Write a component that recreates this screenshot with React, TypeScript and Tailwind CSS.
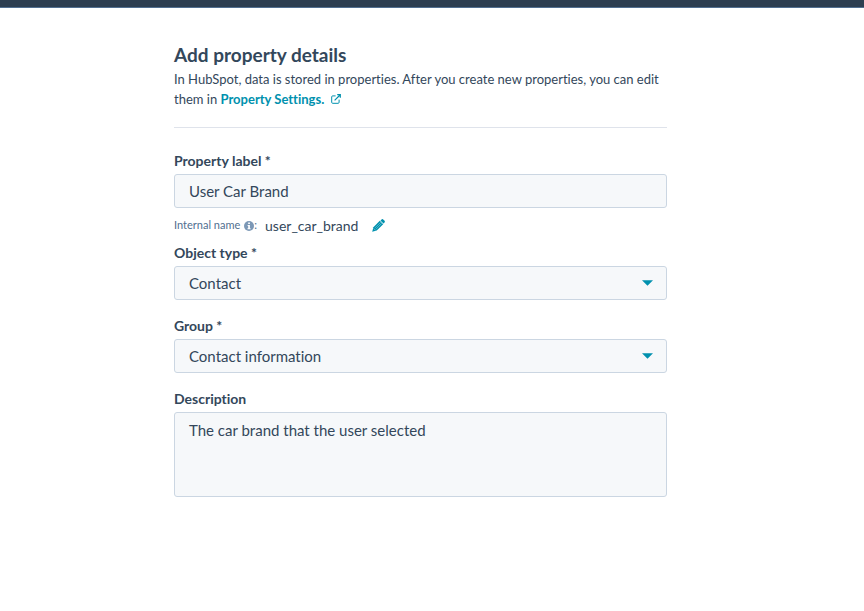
import { useState } from "react";
import type { ReactNode } from "react";

const OBJECT_TYPES = ["Contact", "Company", "Deal", "Ticket"];
const GROUPS = ["Contact information", "Email information", "Web analytics"];

const controlClasses =
  "block w-full rounded-[3px] border border-[#cbd6e2] bg-[#f6f8fa] px-[14px] text-[15px] leading-6 text-[#33475b] outline-none focus:border-[#0091ae]";

interface FieldProps {
  id: string;
  label: string;
  children: ReactNode;
}

function Field({ id, label, children }: FieldProps) {
  return (
    <div>
      <label
        htmlFor={id}
        className="mb-[3px] block text-[14px] leading-5 font-bold"
      >
        {label}
      </label>
      {children}
    </div>
  );
}

interface SelectFieldProps {
  id: string;
  label: string;
  options: string[];
  value: string;
  onChange: (value: string) => void;
}

function SelectField({ id, label, options, value, onChange }: SelectFieldProps) {
  return (
    <Field id={id} label={label}>
      <div className="relative">
        <select
          id={id}
          value={value}
          onChange={(e) => onChange(e.target.value)}
          className={`${controlClasses} h-[34px] appearance-none`}
        >
          {options.map((option) => (
            <option key={option}>{option}</option>
          ))}
        </select>
        <svg
          viewBox="0 0 10 5"
          className="pointer-events-none absolute top-[14px] right-[14px] h-[6px] w-[11px] fill-[#0091ae]"
          aria-hidden="true"
        >
          <path d="M0 0h10L5 5z" />
        </svg>
      </div>
    </Field>
  );
}

function ExternalLinkIcon() {
  return (
    <svg
      viewBox="0 0 10 10"
      className="ml-[7px] inline-block h-[10px] w-[10px] align-baseline"
      fill="none"
      stroke="currentColor"
      aria-hidden="true"
    >
      <path d="M4.6 1.9H1.7a1 1 0 0 0-1 1v5.4a1 1 0 0 0 1 1h5.4a1 1 0 0 0 1-1V5.6" />
      <path d="M3.6 6.4 9 1M6.2.7h3.1v3.1" strokeWidth="1.2" />
    </svg>
  );
}

function InfoIcon() {
  return (
    <svg viewBox="0 0 10 10" className="h-[10px] w-[10px]" aria-hidden="true">
      <circle cx="5" cy="5" r="5" fill="#7c98b6" />
      <path
        d="M4.2 1.5h1.7v1.4H4.2zM3.6 3.9h2.3v3.3h.7v1.1H3.5V7.2h.7V5h-.6z"
        fill="#fff"
      />
    </svg>
  );
}

function PencilIcon() {
  return (
    <svg
      viewBox="0 0 12 12"
      className="h-[13px] w-[13px]"
      fill="currentColor"
      aria-hidden="true"
    >
      <path d="M8.6.6a1.4 1.4 0 0 1 2 0l.8.8a1.4 1.4 0 0 1 0 2l-.8.8L7.8 1.4z" />
      <path d="M7.2 1.7 10.3 4.8 4.4 10.7.2 11.8 1.3 7.6z" />
      <path d="M2.8 8.2 8 3M3.8 9.2 9 4" stroke="#fff" strokeWidth=".3" />
      <path d="M1.6 8.7 3.3 10.4" stroke="#fff" strokeWidth=".4" />
    </svg>
  );
}

export default function App() {
  const [label, setLabel] = useState("User Car Brand");
  const [objectType, setObjectType] = useState("Contact");
  const [group, setGroup] = useState("Contact information");
  const [description, setDescription] = useState(
    "The car brand that the user selected"
  );

  const internalName = label.trim().toLowerCase().replace(/\s+/g, "_");

  return (
    <div className="min-h-screen bg-white font-['Lato','Liberation_Sans',sans-serif] text-[#33475b] [font-variant-ligatures:none]">
      <header className="h-2 border-b border-[#516f90] bg-[#2d3e50]" />
      <main className="pt-[33px] pr-[197px] pb-8 pl-[174px]">
        <section className="border-b border-[#dfe3eb] pb-[18px]">
          <h1 className="text-[19px] leading-7 font-bold">
            Add property details
          </h1>
          <p className="text-[13px] leading-5">
            In HubSpot, data is stored in properties. After you create new
            properties, you can edit them in{" "}
            <a
              href="#property-settings"
              className="font-bold whitespace-nowrap text-[#0091ae]"
            >
              Property Settings.
              <ExternalLinkIcon />
            </a>
          </p>
        </section>

        <form className="pt-[23px]">
          <Field id="property-label" label="Property label *">
            <input
              id="property-label"
              type="text"
              value={label}
              onChange={(e) => setLabel(e.target.value)}
              className={`${controlClasses} h-[34px]`}
            />
          </Field>
          <div className="flex h-[35px] items-center text-[11px] text-[#516f90]">
            <span>Internal name</span>
            <span className="ml-1 flex items-center">
              <InfoIcon />:
            </span>
            <span className="ml-2 text-[14px] text-[#33475b]">
              {internalName}
            </span>
            <button
              type="button"
              aria-label="Edit internal name"
              className="ml-[14px] text-[#0091ae]"
            >
              <PencilIcon />
            </button>
          </div>
          <div className="space-y-4">
            <SelectField
              id="object-type"
              label="Object type *"
              options={OBJECT_TYPES}
              value={objectType}
              onChange={setObjectType}
            />
            <SelectField
              id="group"
              label="Group *"
              options={GROUPS}
              value={group}
              onChange={setGroup}
            />
            <Field id="description" label="Description">
              <textarea
                id="description"
                value={description}
                onChange={(e) => setDescription(e.target.value)}
                className={`${controlClasses} h-[85px] resize-none py-[5px]`}
              />
            </Field>
          </div>
        </form>
      </main>
    </div>
  );
}
